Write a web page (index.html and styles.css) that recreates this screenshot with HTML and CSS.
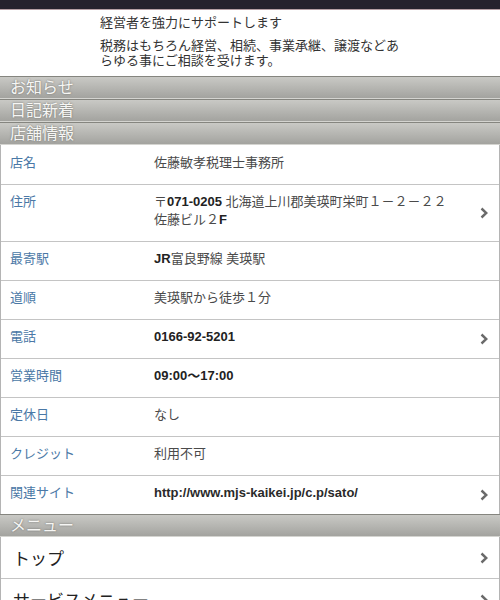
FILE: index.html
```html
<!DOCTYPE html>
<html lang="ja">
<head>
    <meta charset="UTF-8">
    <meta name="viewport" content="width=device-width, initial-scale=1.0">
    <title>佐藤敏孝税理士事務所</title>
    <link rel="stylesheet" href="styles.css">
</head>
<body>
    <div class="topbar"></div>

    <div class="intro">
        <p class="catch">経営者を強力にサポートします</p>
        <p class="lead">税務はもちろん経営、相続、事業承継、譲渡などあらゆる事にご相談を受けます。</p>
    </div>

    <h2 class="section">お知らせ</h2>
    <h2 class="section">日記新着</h2>
    <h2 class="section">店舗情報</h2>

    <dl class="info">
        <div class="row">
            <dt>店名</dt>
            <dd>佐藤敏孝税理士事務所</dd>
        </div>
        <div class="row link">
            <dt>住所</dt>
            <dd>〒<b>071-0205</b> 北海道上川郡美瑛町栄町１－２－２２<br>佐藤ビル２<b>F</b></dd>
            <svg class="chevron" width="8" height="12" viewBox="0 0 8 12"><path d="M1.5 1.5 L6.3 6 L1.5 10.5"/></svg>
        </div>
        <div class="row">
            <dt>最寄駅</dt>
            <dd><b>JR</b>富良野線 美瑛駅</dd>
        </div>
        <div class="row">
            <dt>道順</dt>
            <dd>美瑛駅から徒歩１分</dd>
        </div>
        <div class="row link">
            <dt>電話</dt>
            <dd><b>0166-92-5201</b></dd>
            <svg class="chevron" width="8" height="12" viewBox="0 0 8 12"><path d="M1.5 1.5 L6.3 6 L1.5 10.5"/></svg>
        </div>
        <div class="row">
            <dt>営業時間</dt>
            <dd><b>09:00〜17:00</b></dd>
        </div>
        <div class="row">
            <dt>定休日</dt>
            <dd>なし</dd>
        </div>
        <div class="row">
            <dt>クレジット</dt>
            <dd>利用不可</dd>
        </div>
        <div class="row link">
            <dt>関連サイト</dt>
            <dd><b class="url">http://www.mjs-kaikei.jp/c.p/sato/</b></dd>
            <svg class="chevron" width="8" height="12" viewBox="0 0 8 12"><path d="M1.5 1.5 L6.3 6 L1.5 10.5"/></svg>
        </div>
    </dl>

    <h2 class="section">メニュー</h2>

    <ul class="menu">
        <li>
            <span>トップ</span>
            <svg class="chevron" width="8" height="12" viewBox="0 0 8 12"><path d="M1.5 1.5 L6.3 6 L1.5 10.5"/></svg>
        </li>
        <li>
            <span>サービスメニュー</span>
            <svg class="chevron" width="8" height="12" viewBox="0 0 8 12"><path d="M1.5 1.5 L6.3 6 L1.5 10.5"/></svg>
        </li>
    </ul>
</body>
</html>
```

FILE: styles.css
```css
body {
    font-family: "Liberation Sans", "Noto Sans CJK JP", sans-serif;
    margin: 0;
    padding: 0;
    background-color: #fff;
    color: #444;
}

.topbar {
    height: 9px;
    background-color: #25222e;
    border-bottom: 1px solid #b59fa5;
}

.intro {
    padding: 5px 0 8px 100px;
    font-size: 13px;
    line-height: 15px;
    color: #333;
}

.intro p {
    margin: 0;
    width: 300px;
}

.intro .catch {
    margin-bottom: 8px;
}

.section {
    margin: 0;
    height: 21px;
    padding-left: 10px;
    font-size: 16px;
    font-weight: normal;
    line-height: 21px;
    color: #f6f6f4;
    text-shadow: 0 0 2px #6a6a66;
    background: linear-gradient(#c9c9c5, #a3a39f);
    border-top: 1px solid #85857f;
    border-bottom: 1px solid #d4d4d0;
}

.info {
    margin: 0;
    padding-top: 1px;
    border-left: 1px solid #b4b4b4;
    border-right: 1px solid #b4b4b4;
}

.row {
    display: grid;
    grid-template-columns: 153px 1fr 19px;
    align-items: center;
    padding: 8px 0 12px;
    border-bottom: 1px solid #c4c4c4;
    font-size: 13px;
    line-height: 18px;
}

.row:last-child {
    border-bottom: none;
}

.row dt {
    align-self: start;
    padding-left: 9px;
    color: #4a78a6;
}

.row dd {
    margin: 0;
    align-self: start;
    color: #4a4a4a;
}

.row b {
    font-weight: bold;
    color: #222;
}

.row .url {
    color: #2a2a2a;
}

.chevron {
    fill: none;
    stroke: #6a6a6a;
    stroke-width: 2.4;
}

.row .chevron {
    justify-self: start;
    margin-top: 4px;
}

.menu {
    list-style: none;
    margin: 0;
    padding: 0;
    border-left: 1px solid #b4b4b4;
    border-right: 1px solid #b4b4b4;
}

.menu li {
    display: flex;
    align-items: center;
    justify-content: space-between;
    height: 41px;
    padding: 0 11px 0 12px;
    border-bottom: 1px solid #c4c4c4;
    font-size: 17px;
    color: #222;
}
```
